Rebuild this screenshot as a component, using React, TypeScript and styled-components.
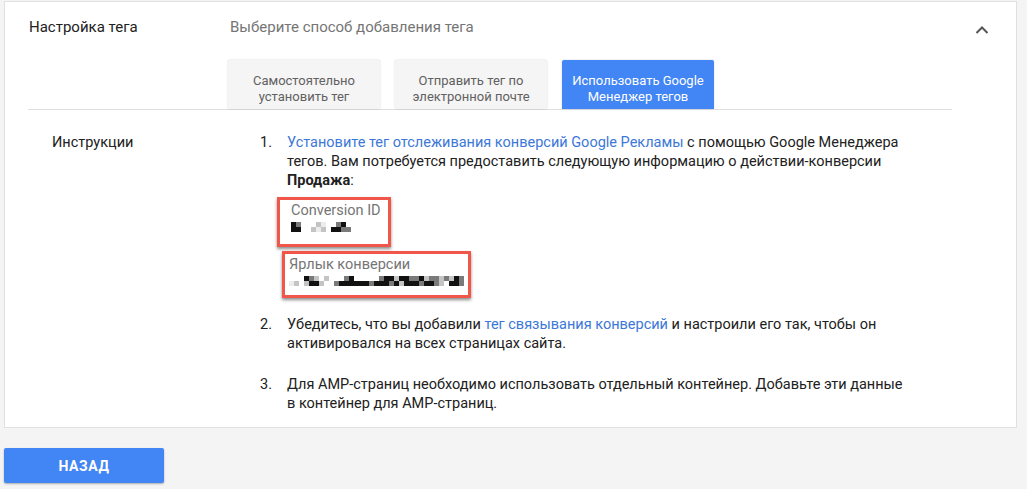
import React from 'react';
import styled, { createGlobalStyle } from 'styled-components';

const GlobalStyle = createGlobalStyle`
  html, body {
    margin: 0;
    padding: 0;
    background: #f4f4f4;
    font-family: Roboto, "Noto Sans", Arial, sans-serif;
    color: #212121;
  }
`;

const Page = styled.div`
  width: 1027px;
  height: 489px;
  padding: 1px 0 0 4px;
  box-sizing: border-box;
`;

const Card = styled.section`
  width: 1013px;
  height: 427px;
  box-sizing: border-box;
  background: #fff;
  border: 1px solid #e0e0e0;
  padding: 0 0 0 23px;
`;

const Header = styled.div`
  display: flex;
  align-items: center;
  height: 50px;
  padding-bottom: 2px;
`;

const Title = styled.div`
  width: 201px;
  font-size: 15px;
  color: #212121;
  padding-left: 1px;
`;

const Subtitle = styled.div`
  flex: 1;
  font-size: 15px;
  color: #757575;
`;

const Collapse = styled.button`
  width: 24px;
  height: 24px;
  margin: 4px 22px 0 0;
  padding: 0;
  border: 0;
  background: none;
  display: flex;
  align-items: center;
  justify-content: center;
`;

const TabBar = styled.div`
  width: 924px;
  display: flex;
  gap: 15px;
  padding: 6px 0 0 200px;
  box-sizing: border-box;
  border-bottom: 1px solid #e0e0e0;
`;

const Tab = styled.button<{ $active?: boolean }>`
  width: 152px;
  height: 49px;
  box-sizing: border-box;
  padding: 8px 6px 0;
  border: 0;
  border-radius: 2px 2px 0 0;
  font-family: inherit;
  font-size: 13px;
  line-height: 16px;
  text-align: center;
  align-self: flex-start;
  color: ${p => (p.$active ? '#fff' : '#616161')};
  background: ${p => (p.$active ? '#4285f4' : '#f5f5f5')};
  box-shadow: 0 0 2px rgba(0, 0, 0, 0.18);
`;

const Body = styled.div`
  display: flex;
  padding: 23px 0 0 24px;
`;

const SideLabel = styled.div`
  width: 208px;
  font-size: 14.5px;
  line-height: 19px;
`;

const Steps = styled.ol`
  margin: 0;
  padding: 0;
  list-style: none;
  width: 653px;
`;

const Step = styled.li`
  display: flex;
  font-size: 14.5px;
  line-height: 19px;
  color: #212121;
  & + & {
    margin-top: 22px;
  }
`;

const Num = styled.span`
  width: 27px;
  flex: none;
`;

const StepText = styled.div`
  flex: 1;
`;

const Link = styled.a`
  color: #3c78d8;
  text-decoration: none;
`;

const Boxes = styled.div`
  display: flex;
  flex-direction: column;
  align-items: flex-start;
  gap: 4px;
  margin: 7px 0 -5px;
`;

const Marked = styled.div<{ $shift: number; $w: number; $h: number; $pad: number }>`
  margin-left: ${p => p.$shift}px;
  width: ${p => p.$w}px;
  height: ${p => p.$h}px;
  box-sizing: border-box;
  border: 3px solid #f0564a;
  box-shadow: 0 2px 3px rgba(0, 0, 0, 0.45);
  padding: 2px 0 0 ${p => p.$pad}px;
`;

const FieldLabel = styled.div`
  font-size: 14.5px;
  line-height: 17px;
  color: #757575;
`;

const Mosaic = styled.div`
  display: flex;
  flex-direction: column;
  margin-top: 3px;
`;

const MosaicRow = styled.div`
  display: flex;
`;

const Cell = styled.span<{ $c: string }>`
  width: 5px;
  height: 5px;
  background: ${p => p.$c};
`;

const Footer = styled.div`
  padding-top: 20px;
`;

const BackButton = styled.button`
  width: 160px;
  height: 35px;
  border: 0;
  border-radius: 2px;
  background: #4285f4;
  color: #fff;
  font-family: inherit;
  font-size: 14px;
  font-weight: 700;
  letter-spacing: 0.6px;
  box-shadow: 0 1px 2px rgba(0, 0, 0, 0.3);
`;

const shades: Record<string, string> = {
  '.': 'transparent',
  '-': '#ececec',
  '+': '#c4c4c4',
  '=': '#7a7a7a',
  '#': '#111',
};

const idMosaic = [
  '#=...+-..=#.',
  '##..+-+.##==',
];

const labelMosaic = [
  '...#=+.+...=#.....=##+##==#+==+=+#=',
  '-+.+##+..=######=###=#+###=##=+.##=',
];

const Pixels = ({ rows }: { rows: string[] }) => (
  <Mosaic>
    {rows.map((r, i) => (
      <MosaicRow key={i}>
        {r.split('').map((ch, j) => (
          <Cell key={j} $c={shades[ch]} />
        ))}
      </MosaicRow>
    ))}
  </Mosaic>
);

const ChevronUp = () => (
  <svg width="14" height="9" viewBox="0 0 14 9">
    <path d="M1.5 8 L7 2.5 L12.5 8" fill="none" stroke="#555" strokeWidth="2" />
  </svg>
);

export default function App() {
  return (
    <Page>
      <GlobalStyle />
      <Card>
        <Header>
          <Title>Настройка тега</Title>
          <Subtitle>Выберите способ добавления тега</Subtitle>
          <Collapse aria-label="Свернуть">
            <ChevronUp />
          </Collapse>
        </Header>
        <TabBar>
          <Tab>Самостоятельно установить тег</Tab>
          <Tab>Отправить тег по электронной почте</Tab>
          <Tab $active>Использовать Google Менеджер тегов</Tab>
        </TabBar>
        <Body>
          <SideLabel>Инструкции</SideLabel>
          <Steps>
            <Step>
              <Num>1.</Num>
              <StepText>
                <Link href="#">Установите тег отслеживания конверсий Google Рекламы</Link> с помощью Google Менеджера
                тегов. Вам потребуется предоставить следующую информацию о действии-конверсии <b>Продажа</b>:
                <Boxes>
                  <Marked $shift={-10} $w={114} $h={50} $pad={11}>
                    <FieldLabel>Conversion ID</FieldLabel>
                    <Pixels rows={idMosaic} />
                  </Marked>
                  <Marked $shift={-5} $w={189} $h={47} $pad={4}>
                    <FieldLabel>Ярлык конверсии</FieldLabel>
                    <Pixels rows={labelMosaic} />
                  </Marked>
                </Boxes>
              </StepText>
            </Step>
            <Step>
              <Num>2.</Num>
              <StepText>
                Убедитесь, что вы добавили <Link href="#">тег связывания конверсий</Link> и настроили его так, чтобы он
                активировался на всех страницах сайта.
              </StepText>
            </Step>
            <Step>
              <Num>3.</Num>
              <StepText>
                Для AMP-страниц необходимо использовать отдельный контейнер. Добавьте эти данные в контейнер для
                AMP-страниц.
              </StepText>
            </Step>
          </Steps>
        </Body>
      </Card>
      <Footer>
        <BackButton>НАЗАД</BackButton>
      </Footer>
    </Page>
  );
}
